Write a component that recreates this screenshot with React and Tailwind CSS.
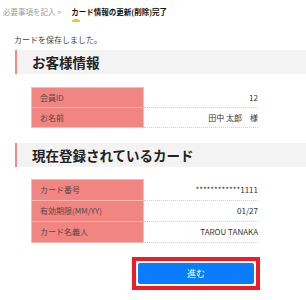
export default function App() {
  const font = { fontFamily: '"Noto Sans CJK JP", "Noto Sans", sans-serif' };
  const Row = ({ label, value, tall }) => (
    <div className={`flex ${tall ? "h-[21px]" : "h-[20px]"}`}>
      <div className="w-[113px] bg-[#f08582] border-x border-b border-[#f9b8b6] flex items-center pl-[8px] text-[8px] text-[#5a4646]">
        {label}
      </div>
      <div className="w-[114px] border-b border-dotted border-[#cfcfcf] flex items-center justify-end text-[8px] text-[#333]">
        {value}
      </div>
    </div>
  );
  const Header = ({ children }) => (
    <div className="h-[24px] bg-[#f3f3f3] border-l-2 border-[#f28b86] flex items-center pl-[15px] text-[13.5px] font-bold text-[#222]">
      {children}
    </div>
  );
  return (
    <div className="w-[306px] h-[300px] bg-white overflow-hidden" style={font}>
      <div className="h-[22px] flex items-center pl-[3px] pt-[1px]">
        <span className="text-[7.5px] text-[#a0a0a0]">必要事項を記入 &gt;</span>
        <span className="relative ml-[10px] text-[7.5px] font-bold text-[#111]">
          カード情報の更新(削除)完了
          <span className="absolute left-[1px] top-[13px] w-[8px] h-[3px] rounded-t-full bg-[#f2c230]"></span>
        </span>
      </div>
      <div className="pl-[14px] mt-[10px] h-[16px] flex items-center text-[8px] text-[#444]">
        カードを保存しました。
      </div>
      <div className="ml-[15px] mt-[2px]">
        <Header>お客様情報</Header>
        <div className="ml-[16px] mt-[13px] border-t border-[#f9b8b6] w-[113px]"></div>
        <div className="ml-[16px]">
          <Row label="会員ID" value="12" />
          <Row label="お名前" value="田中 太郎　様" />
        </div>
        <div className="mt-[15px]">
          <Header>現在登録されているカード</Header>
        </div>
        <div className="ml-[16px] mt-[12px] border-t border-[#f9b8b6] w-[113px]"></div>
        <div className="ml-[16px]">
          <Row label="カード番号" value="************1111" tall />
          <Row label="有効期限(MM/YY)" value="01/27" tall />
          <Row label="カード名義人" value="TAROU TANAKA" tall />
        </div>
      </div>
      <div className="mt-[14px] ml-[132px] w-[128px] h-[33px] border-[4px] border-[#ee1c25] p-[2px]">
        <div className="h-full bg-[#0a7cff] rounded-[2px] flex items-center justify-center text-[9px] text-white">
          進む
        </div>
      </div>
    </div>
  );
}
